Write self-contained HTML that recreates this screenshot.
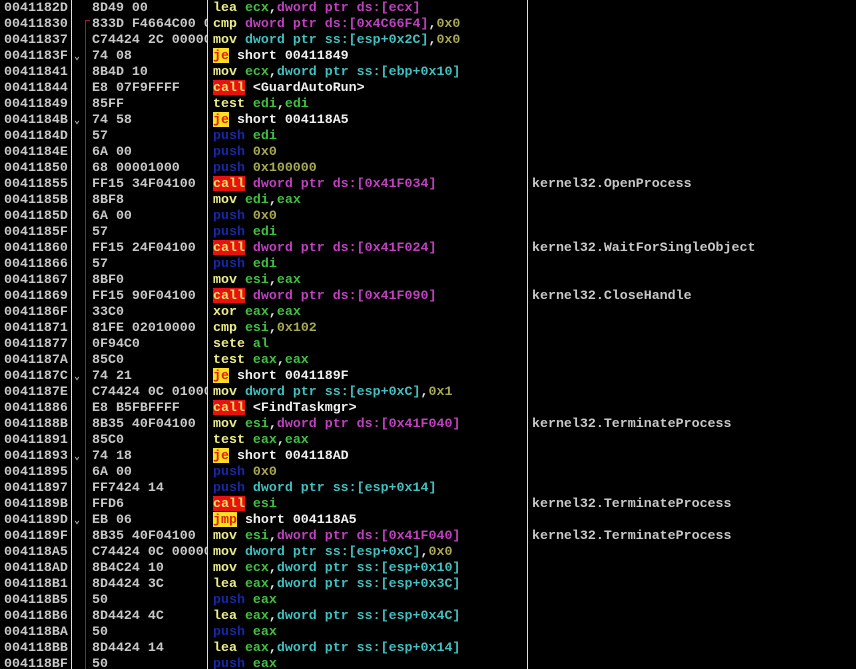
<!DOCTYPE html>
<html><head><meta charset="utf-8"><style>
html,body{margin:0;padding:0;background:#000;width:856px;height:669px;overflow:hidden}
body{font-family:"Liberation Mono","DejaVu Sans Mono",monospace;font-size:13.3px;font-weight:bold;position:relative}
.sep{position:absolute;top:0;width:1px;height:669px;background:#e0e0e0}
.row{position:absolute;left:0;height:16px;line-height:16px;white-space:pre;width:856px}
.a{position:absolute;left:4px;color:#c8c8c8}
.h{position:absolute;left:92px;width:115px;overflow:hidden;color:#c8c8c8}
.i{position:absolute;left:213px;color:#e8e8e8}
.k{position:absolute;left:532px;color:#c8c8c8}
.m{color:#ecec88}.r{color:#40c040}.d{color:#c040c0}.s{color:#40c0c0}.c{color:#a8a850}
.p{color:#1428a8}.cl{background:#e81010;color:#f0e060}.j{background:#ffe020;color:#e02000}.w{color:#f0f0f0}
.v{position:absolute;left:74px;color:#c8c8c8;font-size:10px;top:2px}
</style></head><body>
<div class="sep" style="left:71px"></div>
<div class="sep" style="left:207px"></div>
<div class="sep" style="left:527px"></div>
<div style="position:absolute;left:85px;top:20px;width:1px;height:649px;background:#a02020"></div>
<div style="position:absolute;left:85px;top:20px;width:5px;height:1px;background:#a02020"></div>
<div class="row" style="top:0"><span class="a">0041182D</span><span class="h">8D49 00</span><span class="i"><span class="m">lea</span> <span class="r">ecx</span>,<span class="d">dword ptr ds:[ecx]</span></span></div>
<div class="row" style="top:16px"><span class="a">00411830</span><span class="h">833D F4664C00 00</span><span class="i"><span class="m">cmp</span> <span class="d">dword ptr ds:[0x4C66F4]</span>,<span class="c">0x0</span></span></div>
<div class="row" style="top:32px"><span class="a">00411837</span><span class="h">C74424 2C 00000000</span><span class="i"><span class="m">mov</span> <span class="s">dword ptr ss:[esp+0x2C]</span>,<span class="c">0x0</span></span></div>
<div class="row" style="top:48px"><span class="a">0041183F</span><span class="v">⌄</span><span class="h">74 08</span><span class="i"><span class="j">je</span> <span class="w">short 00411849</span></span></div>
<div class="row" style="top:64px"><span class="a">00411841</span><span class="h">8B4D 10</span><span class="i"><span class="m">mov</span> <span class="r">ecx</span>,<span class="s">dword ptr ss:[ebp+0x10]</span></span></div>
<div class="row" style="top:80px"><span class="a">00411844</span><span class="h">E8 07F9FFFF</span><span class="i"><span class="cl">call</span> <span class="w">&lt;GuardAutoRun&gt;</span></span></div>
<div class="row" style="top:96px"><span class="a">00411849</span><span class="h">85FF</span><span class="i"><span class="m">test</span> <span class="r">edi</span>,<span class="r">edi</span></span></div>
<div class="row" style="top:112px"><span class="a">0041184B</span><span class="v">⌄</span><span class="h">74 58</span><span class="i"><span class="j">je</span> <span class="w">short 004118A5</span></span></div>
<div class="row" style="top:128px"><span class="a">0041184D</span><span class="h">57</span><span class="i"><span class="p">push</span> <span class="r">edi</span></span></div>
<div class="row" style="top:144px"><span class="a">0041184E</span><span class="h">6A 00</span><span class="i"><span class="p">push</span> <span class="c">0x0</span></span></div>
<div class="row" style="top:160px"><span class="a">00411850</span><span class="h">68 00001000</span><span class="i"><span class="p">push</span> <span class="c">0x100000</span></span></div>
<div class="row" style="top:176px"><span class="a">00411855</span><span class="h">FF15 34F04100</span><span class="i"><span class="cl">call</span> <span class="d">dword ptr ds:[0x41F034]</span></span><span class="k">kernel32.OpenProcess</span></div>
<div class="row" style="top:192px"><span class="a">0041185B</span><span class="h">8BF8</span><span class="i"><span class="m">mov</span> <span class="r">edi</span>,<span class="r">eax</span></span></div>
<div class="row" style="top:208px"><span class="a">0041185D</span><span class="h">6A 00</span><span class="i"><span class="p">push</span> <span class="c">0x0</span></span></div>
<div class="row" style="top:224px"><span class="a">0041185F</span><span class="h">57</span><span class="i"><span class="p">push</span> <span class="r">edi</span></span></div>
<div class="row" style="top:240px"><span class="a">00411860</span><span class="h">FF15 24F04100</span><span class="i"><span class="cl">call</span> <span class="d">dword ptr ds:[0x41F024]</span></span><span class="k">kernel32.WaitForSingleObject</span></div>
<div class="row" style="top:256px"><span class="a">00411866</span><span class="h">57</span><span class="i"><span class="p">push</span> <span class="r">edi</span></span></div>
<div class="row" style="top:272px"><span class="a">00411867</span><span class="h">8BF0</span><span class="i"><span class="m">mov</span> <span class="r">esi</span>,<span class="r">eax</span></span></div>
<div class="row" style="top:288px"><span class="a">00411869</span><span class="h">FF15 90F04100</span><span class="i"><span class="cl">call</span> <span class="d">dword ptr ds:[0x41F090]</span></span><span class="k">kernel32.CloseHandle</span></div>
<div class="row" style="top:304px"><span class="a">0041186F</span><span class="h">33C0</span><span class="i"><span class="m">xor</span> <span class="r">eax</span>,<span class="r">eax</span></span></div>
<div class="row" style="top:320px"><span class="a">00411871</span><span class="h">81FE 02010000</span><span class="i"><span class="m">cmp</span> <span class="r">esi</span>,<span class="c">0x102</span></span></div>
<div class="row" style="top:336px"><span class="a">00411877</span><span class="h">0F94C0</span><span class="i"><span class="m">sete</span> <span class="r">al</span></span></div>
<div class="row" style="top:352px"><span class="a">0041187A</span><span class="h">85C0</span><span class="i"><span class="m">test</span> <span class="r">eax</span>,<span class="r">eax</span></span></div>
<div class="row" style="top:368px"><span class="a">0041187C</span><span class="v">⌄</span><span class="h">74 21</span><span class="i"><span class="j">je</span> <span class="w">short 0041189F</span></span></div>
<div class="row" style="top:384px"><span class="a">0041187E</span><span class="h">C74424 0C 01000000</span><span class="i"><span class="m">mov</span> <span class="s">dword ptr ss:[esp+0xC]</span>,<span class="c">0x1</span></span></div>
<div class="row" style="top:400px"><span class="a">00411886</span><span class="h">E8 B5FBFFFF</span><span class="i"><span class="cl">call</span> <span class="w">&lt;FindTaskmgr&gt;</span></span></div>
<div class="row" style="top:416px"><span class="a">0041188B</span><span class="h">8B35 40F04100</span><span class="i"><span class="m">mov</span> <span class="r">esi</span>,<span class="d">dword ptr ds:[0x41F040]</span></span><span class="k">kernel32.TerminateProcess</span></div>
<div class="row" style="top:432px"><span class="a">00411891</span><span class="h">85C0</span><span class="i"><span class="m">test</span> <span class="r">eax</span>,<span class="r">eax</span></span></div>
<div class="row" style="top:448px"><span class="a">00411893</span><span class="v">⌄</span><span class="h">74 18</span><span class="i"><span class="j">je</span> <span class="w">short 004118AD</span></span></div>
<div class="row" style="top:464px"><span class="a">00411895</span><span class="h">6A 00</span><span class="i"><span class="p">push</span> <span class="c">0x0</span></span></div>
<div class="row" style="top:480px"><span class="a">00411897</span><span class="h">FF7424 14</span><span class="i"><span class="p">push</span> <span class="s">dword ptr ss:[esp+0x14]</span></span></div>
<div class="row" style="top:496px"><span class="a">0041189B</span><span class="h">FFD6</span><span class="i"><span class="cl">call</span> <span class="r">esi</span></span><span class="k">kernel32.TerminateProcess</span></div>
<div class="row" style="top:512px"><span class="a">0041189D</span><span class="v">⌄</span><span class="h">EB 06</span><span class="i"><span class="j">jmp</span> <span class="w">short 004118A5</span></span></div>
<div class="row" style="top:528px"><span class="a">0041189F</span><span class="h">8B35 40F04100</span><span class="i"><span class="m">mov</span> <span class="r">esi</span>,<span class="d">dword ptr ds:[0x41F040]</span></span><span class="k">kernel32.TerminateProcess</span></div>
<div class="row" style="top:544px"><span class="a">004118A5</span><span class="h">C74424 0C 00000000</span><span class="i"><span class="m">mov</span> <span class="s">dword ptr ss:[esp+0xC]</span>,<span class="c">0x0</span></span></div>
<div class="row" style="top:560px"><span class="a">004118AD</span><span class="h">8B4C24 10</span><span class="i"><span class="m">mov</span> <span class="r">ecx</span>,<span class="s">dword ptr ss:[esp+0x10]</span></span></div>
<div class="row" style="top:576px"><span class="a">004118B1</span><span class="h">8D4424 3C</span><span class="i"><span class="m">lea</span> <span class="r">eax</span>,<span class="s">dword ptr ss:[esp+0x3C]</span></span></div>
<div class="row" style="top:592px"><span class="a">004118B5</span><span class="h">50</span><span class="i"><span class="p">push</span> <span class="r">eax</span></span></div>
<div class="row" style="top:608px"><span class="a">004118B6</span><span class="h">8D4424 4C</span><span class="i"><span class="m">lea</span> <span class="r">eax</span>,<span class="s">dword ptr ss:[esp+0x4C]</span></span></div>
<div class="row" style="top:624px"><span class="a">004118BA</span><span class="h">50</span><span class="i"><span class="p">push</span> <span class="r">eax</span></span></div>
<div class="row" style="top:640px"><span class="a">004118BB</span><span class="h">8D4424 14</span><span class="i"><span class="m">lea</span> <span class="r">eax</span>,<span class="s">dword ptr ss:[esp+0x14]</span></span></div>
<div class="row" style="top:656px"><span class="a">004118BF</span><span class="h">50</span><span class="i"><span class="p">push</span> <span class="r">eax</span></span></div>
</body></html>
